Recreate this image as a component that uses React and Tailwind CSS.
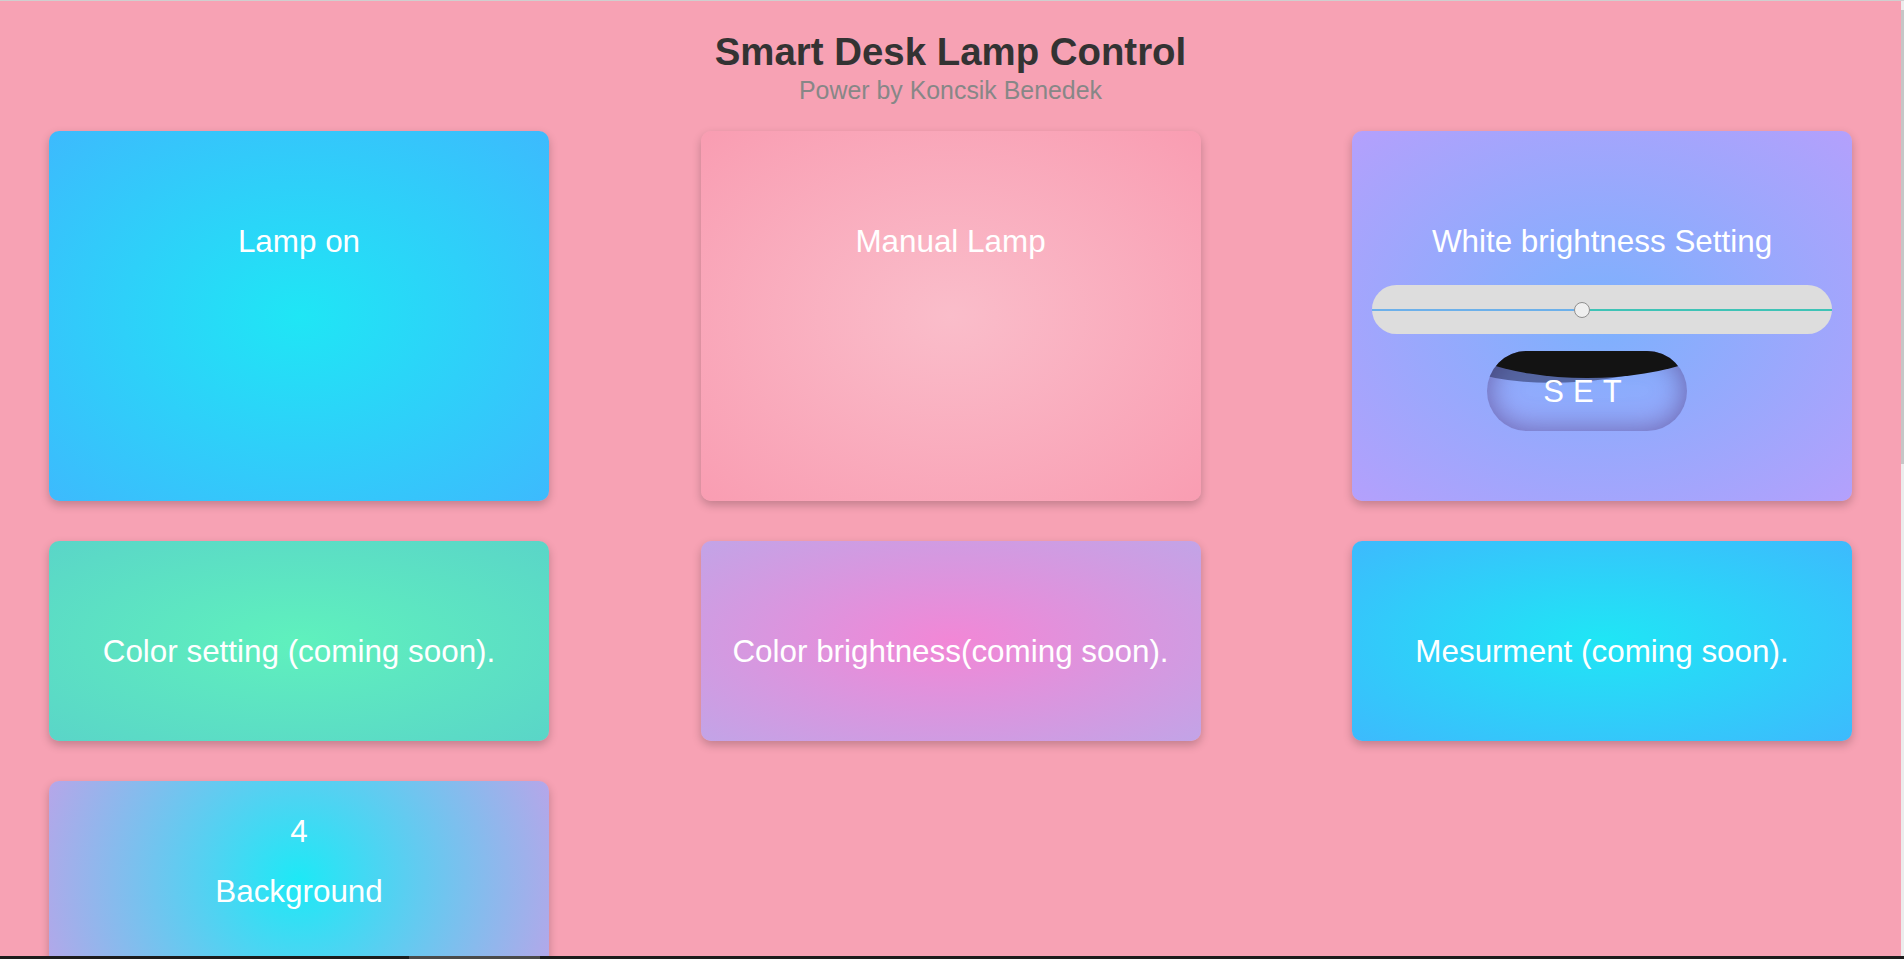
import React from "react";

const font = { fontFamily: '"Liberation Sans", Arial, sans-serif' };

function Card({ bg, h, children }) {
  return (
    <div
      className={`${bg} ${h} rounded-[10px] shadow-[0_4px_10px_rgba(0,0,0,0.22)] flex flex-col items-center text-white text-[31.4px] leading-[36px]`}
    >
      {children}
    </div>
  );
}

export default function App() {
  return (
    <div
      className="w-[1904px] h-[959px] overflow-hidden flex flex-col bg-[#f7a2b4] border-t border-[#cfcfcf]"
      style={font}
    >
      <div className="flex flex-1 min-h-0">
        <main className="flex-1 min-w-0 overflow-hidden">
          <header className="flex flex-col items-center pt-[29px]">
            <h1 className="text-[38.4px] leading-[44px] font-bold text-[#333333]">
              Smart Desk Lamp Control
            </h1>
            <p className="mt-[2px] text-[24.9px] leading-[29px] text-[#878787]">
              Power by Koncsik Benedek
            </p>
          </header>

          <div className="mt-[26px] px-[49px] grid grid-cols-[500px_500px_500px] justify-between gap-y-[40px]">
            <Card
              bg="bg-[radial-gradient(ellipse_at_center,#1fe6f5_0%,#3dbafd_100%)]"
              h="h-[370px]"
            >
              <div className="pt-[93px]">Lamp on</div>
            </Card>

            <Card
              bg="bg-[radial-gradient(ellipse_at_center,#fabdca_0%,#f99db2_100%)]"
              h="h-[370px]"
            >
              <div className="pt-[93px]">Manual Lamp</div>
            </Card>

            <Card
              bg="bg-[radial-gradient(ellipse_at_center,#7cb1fd_0%,#b4a0fc_100%)]"
              h="h-[370px]"
            >
              <div className="pt-[93px]">White brightness Setting</div>
              <div className="mt-[25px] w-[460px] h-[49px] rounded-full bg-[#dddddd] flex items-center">
                <div className="w-[45.6%] h-[2px] bg-[#6cb0ea]" />
                <div className="w-[16px] h-[16px] -mx-[8px] relative z-10 rounded-full bg-[#efefef] border border-[#8f8f8f]" />
                <div className="flex-1 h-[2px] bg-[#3ec3b6]" />
              </div>
              <button className="mt-[17px] mr-[30px] relative w-[200px] h-[80px] rounded-full overflow-hidden shadow-[inset_0_0_28px_rgba(95,80,150,0.8)] flex items-center justify-center text-white text-[31px] tracking-[9px]">
                <span className="absolute left-[-62px] top-[-85px] w-[300px] h-[116px] rounded-[50%] bg-[rgba(40,45,90,0.55)] -rotate-[4deg]" />
                <span className="absolute left-[-50px] top-[-89px] w-[300px] h-[116px] rounded-[50%] bg-[#131313]" />
                <span className="relative mt-[1px]">SET</span>
              </button>
            </Card>

            <Card
              bg="bg-[radial-gradient(ellipse_at_center,#5ff1bd_0%,#5ad5c8_100%)]"
              h="h-[200px]"
            >
              <div className="pt-[93px]">Color setting (coming soon).</div>
            </Card>

            <Card
              bg="bg-[radial-gradient(ellipse_at_center,#f287d6_0%,#c2a4e7_100%)]"
              h="h-[200px]"
            >
              <div className="pt-[93px]">Color brightness(coming soon).</div>
            </Card>

            <Card
              bg="bg-[radial-gradient(ellipse_at_center,#1fe6f5_0%,#3dbafd_100%)]"
              h="h-[200px]"
            >
              <div className="pt-[93px]">Mesurment (coming soon).</div>
            </Card>

            <Card
              bg="bg-[radial-gradient(circle,#1de9f6_0%,#b6a6e9_100%)]"
              h="h-[200px]"
            >
              <div className="pt-[33px]">4</div>
              <div className="mt-[24px]">Background</div>
            </Card>
          </div>
        </main>
        <div className="w-[3px] flex flex-col bg-[#ececec]">
          <div className="h-[9px]" />
          <div className="h-[454px] bg-[#c6c6c6]" />
        </div>
      </div>
      <div className="h-[3px] bg-[#1c1c1c] flex">
        <div className="ml-[409px] w-[131px] bg-[#4a4a4a]" />
      </div>
    </div>
  );
}
